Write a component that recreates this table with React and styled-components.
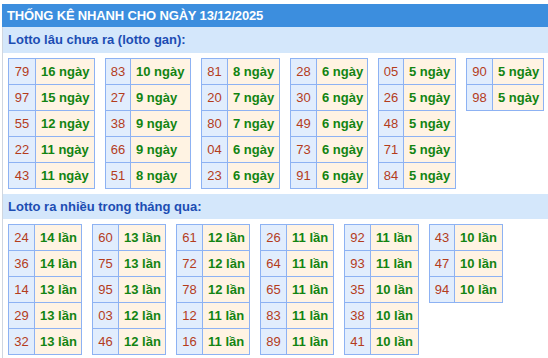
import React from 'react';
import styled, { createGlobalStyle } from 'styled-components';

const GlobalStyle = createGlobalStyle`
  body {
    margin: 0;
    background: #fff;
    font-family: Arial, "Liberation Sans", sans-serif;
  }
`;

const Box = styled.div`
  margin: 4px 0 0 2px;
  border-left: 1px solid #cfd6e0;
  padding-bottom: 3px;
`;

const Title = styled.div`
  height: 23px;
  line-height: 23px;
  margin-left: -1px;
  padding-left: 5px;
  background: #3c8ede;
  color: #fff;
  font-size: 13px;
  font-weight: bold;
  letter-spacing: -0.15px;
  white-space: nowrap;
`;

const SubTitle = styled.div`
  height: ${(p) => p.h}px;
  line-height: ${(p) => p.h}px;
  padding-left: 5px;
  background: #d4e7fb;
  color: #1c4db3;
  font-size: 13px;
  font-weight: bold;
`;

const Blocks = styled.div`
  display: flex;
  align-items: flex-start;
  gap: 10px;
  padding: 5px 0 5px 5px;
`;

const Table = styled.table`
  border-collapse: separate;
  border-spacing: 0;
  table-layout: fixed;
  border-top: 1px solid #8db2f3;
  border-left: 1px solid #8db2f3;
  font-size: 13px;
`;

const Cell = styled.td`
  box-sizing: border-box;
  height: 26px;
  padding: 0;
  border-right: 1px solid #8db2f3;
  border-bottom: 1px solid #8db2f3;
  white-space: nowrap;
`;

const Num = styled(Cell)`
  width: ${(p) => p.w}px;
  background: #e1edfd;
  color: #b43c1c;
  text-align: center;
`;

const Val = styled(Cell)`
  width: ${(p) => p.w}px;
  padding-left: 5px;
  background: #fff3e3;
  color: #128412;
  font-weight: bold;
`;

const gan = [
  { n: 27, v: 59, rows: [['79', 16], ['97', 15], ['55', 12], ['22', 11], ['43', 11]] },
  { n: 25, v: 60, rows: [['83', 10], ['27', 9], ['38', 9], ['66', 9], ['51', 8]] },
  { n: 26, v: 52, rows: [['81', 8], ['20', 7], ['80', 7], ['04', 6], ['23', 6]] },
  { n: 26, v: 51, rows: [['28', 6], ['30', 6], ['49', 6], ['73', 6], ['91', 6]] },
  { n: 25, v: 52, rows: [['05', 5], ['26', 5], ['48', 5], ['71', 5], ['84', 5]] },
  { n: 26, v: 51, rows: [['90', 5], ['98', 5]] },
];

const nhieu = [
  { n: 26, v: 47, rows: [['24', 14], ['36', 14], ['14', 13], ['29', 13], ['32', 13]] },
  { n: 26, v: 47, rows: [['60', 13], ['75', 13], ['95', 13], ['03', 12], ['46', 12]] },
  { n: 26, v: 47, rows: [['61', 12], ['72', 12], ['78', 12], ['12', 11], ['16', 11]] },
  { n: 26, v: 47, rows: [['26', 11], ['64', 11], ['65', 11], ['83', 11], ['89', 11]] },
  { n: 26, v: 48, rows: [['92', 11], ['93', 11], ['35', 10], ['38', 10], ['41', 10]] },
  { n: 25, v: 48, rows: [['43', 10], ['47', 10], ['94', 10]] },
];

function Group({ g, unit }) {
  return (
    <Table>
      <tbody>
        {g.rows.map(([num, c]) => (
          <tr key={num}>
            <Num w={g.n}>{num}</Num>
            <Val w={g.v}>{c} {unit}</Val>
          </tr>
        ))}
      </tbody>
    </Table>
  );
}

export default function App() {
  return (
    <>
      <GlobalStyle />
      <Box>
        <Title>THỐNG KÊ NHANH CHO NGÀY 13/12/2025</Title>
        <SubTitle h={26}>Lotto lâu chưa ra (lotto gan):</SubTitle>
        <Blocks>
          {gan.map((g, i) => <Group key={i} g={g} unit="ngày" />)}
        </Blocks>
        <SubTitle h={25}>Lotto ra nhiều trong tháng qua:</SubTitle>
        <Blocks>
          {nhieu.map((g, i) => <Group key={i} g={g} unit="lần" />)}
        </Blocks>
      </Box>
    </>
  );
}
